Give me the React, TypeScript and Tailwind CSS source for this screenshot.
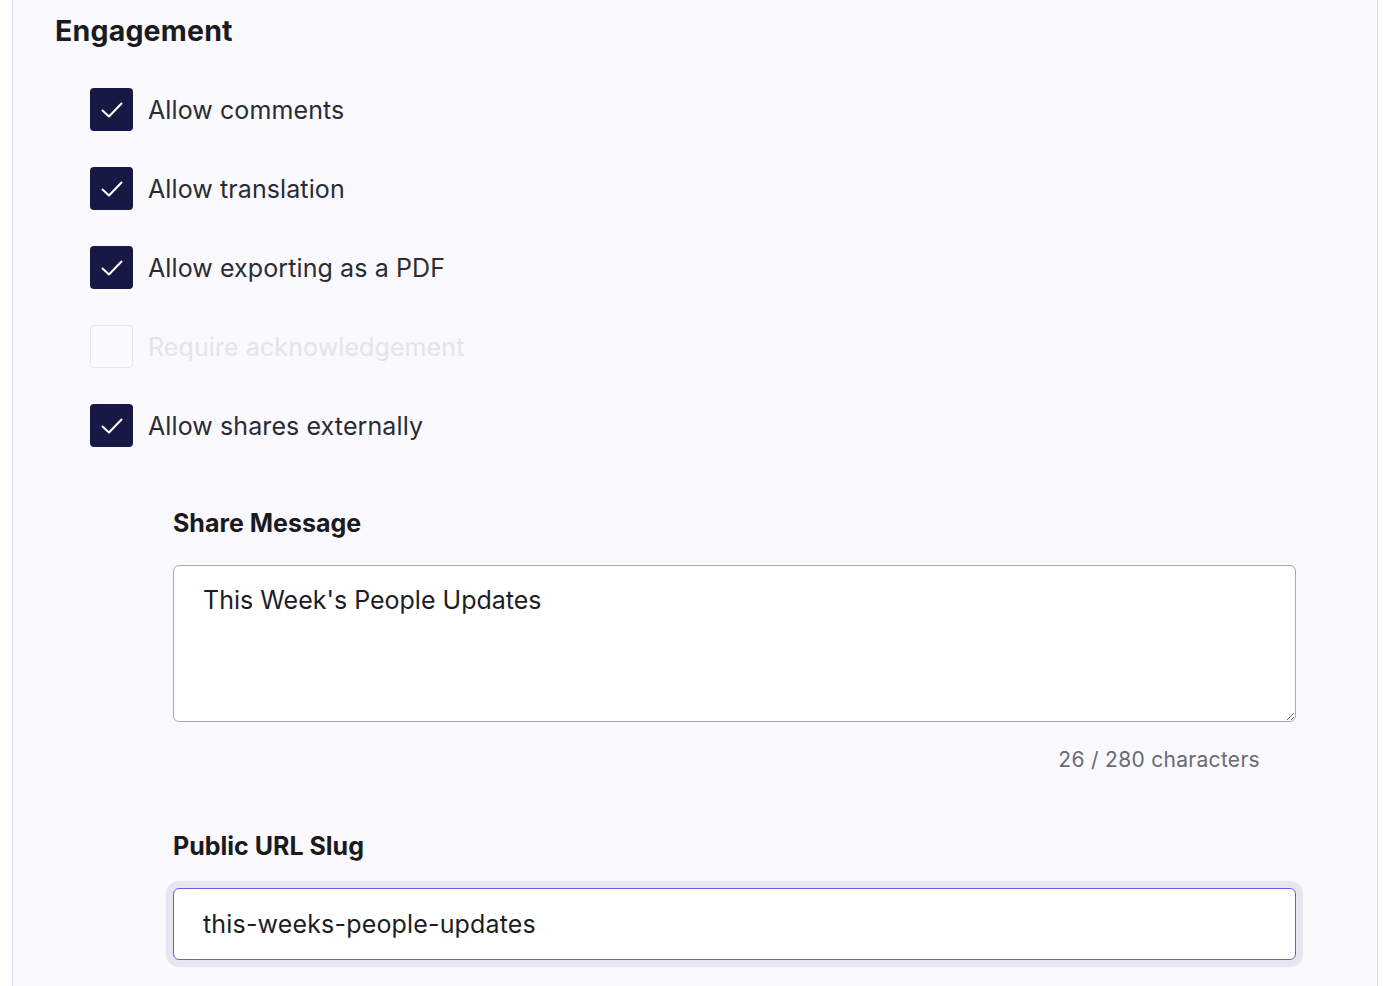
import { useState } from "react"

const OPTIONS = [
  { id: "comments", label: "Allow comments", checked: true },
  { id: "translation", label: "Allow translation", checked: true },
  { id: "pdf", label: "Allow exporting as a PDF", checked: true },
  { id: "ack", label: "Require acknowledgement", checked: false, disabled: true },
  { id: "external", label: "Allow shares externally", checked: true },
]

function CheckIcon() {
  return (
    <svg viewBox="0 0 24 18" className="h-[18px] w-[24px]" fill="none" stroke="white" strokeWidth={2} strokeLinecap="round" strokeLinejoin="round">
      <path d="M2.5 9.5l6.5 6L21.5 2.5" />
    </svg>
  )
}

export default function App() {
  const [values, setValues] = useState<Record<string, boolean>>(
    Object.fromEntries(OPTIONS.map((o) => [o.id, o.checked])),
  )
  const [message, setMessage] = useState("This Week's People Updates")
  const [slug, setSlug] = useState("this-weeks-people-updates")

  return (
    <div className="min-h-screen bg-white font-['Inter','Noto_Sans',sans-serif] text-[#1d1d24]">
      <div className="ml-[12px] mr-[10px] min-h-[986px] border-x border-[#dedee8] bg-[#f9f9fe] pl-[42px] pr-[81px] pt-[13px]">
        <h2 className="text-[28.5px] font-bold leading-[36px] tracking-[0.2px] text-[#1a1a20]">Engagement</h2>

        <div className="ml-[35px] mt-[39px] flex flex-col gap-[36px]">
          {OPTIONS.map((o) => {
            const checked = values[o.id]
            return (
              <label key={o.id} className={`flex h-[43px] items-center gap-[15px] ${o.disabled ? "cursor-not-allowed" : "cursor-pointer"}`}>
                <button
                  type="button"
                  disabled={o.disabled}
                  onClick={() => setValues((v) => ({ ...v, [o.id]: !v[o.id] }))}
                  className={`flex h-[43px] w-[43px] shrink-0 items-center justify-center rounded-[4px] ${
                    checked ? "bg-[#181845]" : "border border-[#e6e6ee] bg-[#fbfbfe]"
                  }`}
                >
                  {checked && <CheckIcon />}
                </button>
                <span className={`text-[25px] leading-[32px] tracking-[0.1px] ${o.disabled ? "text-[#e4e4ea]" : "text-[#2b2b33]"}`}>
                  {o.label}
                </span>
              </label>
            )
          })}
        </div>

        <div className="ml-[118px] mt-[60px]">
          <div className="text-[25px] font-bold leading-[32px] text-[#1a1a20]">Share Message</div>
          <textarea
            value={message}
            onChange={(e) => setMessage(e.target.value)}
            className="mt-[26px] block h-[157px] w-full rounded-[6px] border border-[#a9a9b2] bg-white px-[29px] py-[17px] text-[25px] leading-[34px] tracking-[0px] text-[#1d1d24] outline-none"
          />
          <div className="mt-[24px] pr-[36px] text-right text-[21px] leading-[28px] tracking-[0.3px] text-[#6a6a72]">
            {message.length} / 280 characters
          </div>

          <div className="mt-[56px] text-[25px] font-bold leading-[32px] text-[#1a1a20]">Public URL Slug</div>
          <input
            value={slug}
            onChange={(e) => setSlug(e.target.value)}
            className="mt-[26px] block h-[72px] w-full rounded-[6px] border border-[#6b5ce6] bg-white px-[29px] text-[25px] tracking-[0.17px] text-[#1d1d24] outline-none ring-[7px] ring-[#e7e5f0]"
          />
        </div>
      </div>
    </div>
  )
}
